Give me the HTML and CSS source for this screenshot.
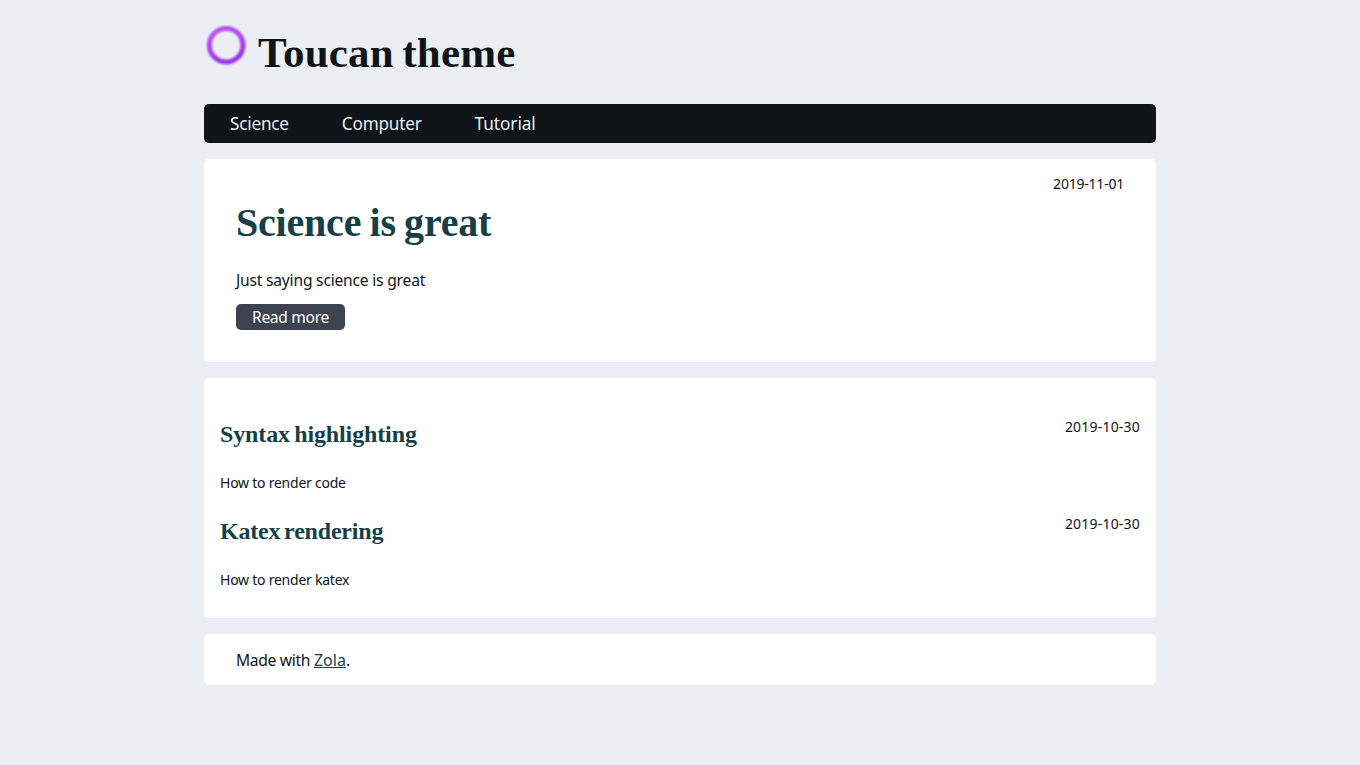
FILE: index.html
```html
<!DOCTYPE html>
<html lang="en">
<head>
<meta charset="utf-8">
<title>Toucan theme</title>
<link rel="stylesheet" href="styles.css">
</head>
<body>
<div class="page">
  <header class="brand">
    <svg class="logo" viewBox="0 0 44 44" aria-hidden="true">
      <defs><filter id="soft"><feGaussianBlur stdDeviation="1"/></filter>
      <linearGradient id="ring" x1="0" y1="0" x2="0.4" y2="1"><stop offset="0" stop-color="#bf55f2"/><stop offset="1" stop-color="#9a30ea"/></linearGradient></defs>
      <circle cx="22.2" cy="22.2" r="16.8" fill="none" stroke="url(#ring)" stroke-width="5" filter="url(#soft)"/>
    </svg>
    <span class="title">Toucan theme</span>
  </header>
  <nav class="menu"><a>Science</a><a>Computer</a><a class="last">Tutorial</a></nav>
  <main>
    <article class="card featured">
      <time class="date">2019-11-01</time>
      <h1 class="headline">Science is great</h1>
      <p class="summary">Just saying science is great</p>
      <a class="more">Read more</a>
    </article>
    <section class="card posts">
      <article class="post"><div class="row"><h2 class="name">Syntax highlighting</h2><time class="date">2019-10-30</time></div><p class="desc">How to render code</p></article>
      <article class="post"><div class="row"><h2 class="name katex">Katex rendering</h2><time class="date">2019-10-30</time></div><p class="desc">How to render katex</p></article>
    </section>
  </main>
  <footer class="card foot"><span class="made">Made with </span><a class="link">Zola</a>.</footer>
</div>
</body>
</html>
```
FILE: styles.css
```css
* { box-sizing: border-box; }
body { margin: 0; background: #ebeff4; color: #0f1419; font: 16px/26px "Noto Sans", sans-serif; }
h1, h2, p { margin: 0; }
.page { width: 952px; margin: 0 auto; padding-top: 20px; }
.brand { height: 84px; display: flex; }
.logo { width: 44px; height: 44px; margin-top: 3px; }
.title { margin-left: 10px; font: bold 43px/66px "Liberation Serif", serif; letter-spacing: 0.2px; word-spacing: -2.5px; }
.menu { height: 39px; border-radius: 5px; background: #0f1419; color: #ebeff4; font-size: 17.2px; line-height: 39px; letter-spacing: -0.22px; display: flex; gap: 53px; padding-left: 26px; }
.last { letter-spacing: -0.05px; }
.card { background: #fff; border-radius: 5px; margin-top: 16px; }
.featured { height: 203px; padding: 12px 32px; display: flex; flex-direction: column; align-items: flex-start; }
.date { font-size: 14px; letter-spacing: 0.2px; }
.featured .date { align-self: flex-end; letter-spacing: -0.22px; }
.headline { color: #163f48; font: bold 40px/52px "Liberation Serif", serif; letter-spacing: -0.2px; word-spacing: -1.5px; }
.summary { margin-top: 18px; font-size: 15.6px; letter-spacing: -0.2px; }
.more { margin-top: 11px; padding-left: 16px; width: 109px; height: 26px; border-radius: 5px; background: #3d4251; color: #fff; font-size: 15.6px; letter-spacing: -0.32px; }
.posts { height: 240px; padding: 36px 16px; }
.post { height: 97px; }
.row { display: flex; justify-content: space-between; }
.name { color: #163f48; font: bold 24px/40px "Liberation Serif", serif; letter-spacing: -0.12px; word-spacing: -1.7px; }
.katex { letter-spacing: -0.2px; word-spacing: -2px; }
.desc { margin-top: 16px; font-size: 14px; letter-spacing: -0.24px; }
.foot { height: 51px; padding: 13px 32px; }
.made { font-size: 15.6px; letter-spacing: -0.3px; }
.link { color: #163f48; text-decoration: underline; }
```
